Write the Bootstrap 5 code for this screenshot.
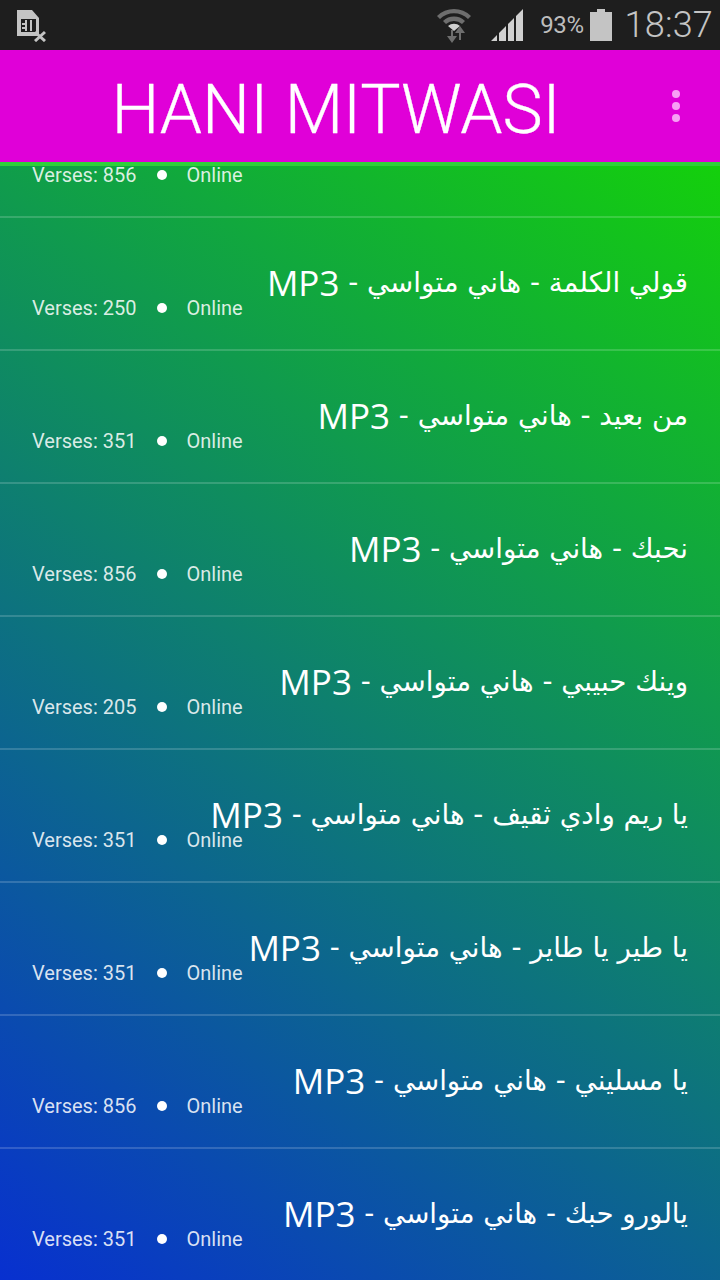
<!DOCTYPE html>
<html lang="ar">
<head>
<meta charset="utf-8">
<link rel="stylesheet" href="https://cdn.jsdelivr.net/npm/bootstrap@5.3.0/dist/css/bootstrap.min.css">
<style>
html,body{margin:0;height:1280px;overflow:hidden;background:#000}
.phone{width:720px;height:1280px;font-family:Roboto,"Liberation Sans",sans-serif;overflow:hidden}
.sbar{height:50px;background:#1e1e1e;color:#bdbdbd;padding:0 7px 0 14px}
.wifi{margin-top:-1px}
.signal{margin-left:17px}
.pct{font-size:24px;letter-spacing:-.4px;margin:0 6px 0 16px}
.clock{font-size:36px;font-weight:300;letter-spacing:.2px;margin-left:13px;line-height:50px;color:#c4c4c4}
.appbar{height:112px;background:#e000d8;color:#fff}
.apptitle{font-size:67.6px;font-weight:300;line-height:1;width:672px;text-align:center;margin-top:9px;-webkit-text-stroke:.3px #fff}
.dotcol{gap:4px}
.vdot{width:8px;height:8px;border-radius:50%;background:#f7a0f5;display:block}
.sep{height:4px;background:#2fd03a}
.listwrap{height:1114px;background:linear-gradient(216deg,#14d00c 0%,#0830d0 100%)}
.songrow{height:133px;border-bottom:2px solid rgba(255,255,255,.17);color:#fff;display:grid;padding:0 32px;grid-template-columns:1fr;align-items:start}
.songrow.cut{height:52px}
.songtitle{grid-area:1/1;justify-self:end;font-size:27.7px;line-height:40px;direction:rtl;white-space:nowrap;font-family:"DejaVu Sans",sans-serif;margin-top:45px}
.ar{position:relative;top:-4px}
.en{font-family:"Open Sans",sans-serif;font-size:35px;font-weight:400}
.meta{grid-area:1/1;justify-self:start;margin-top:78px;display:flex;align-items:center;font-size:20px;line-height:24px;color:rgba(255,255,255,.85);white-space:nowrap}
.cut .meta{margin-top:-3px}
.mdot{width:10px;height:10px;border-radius:50%;background:#fff;margin:0 19px 0 21px}
</style>
</head>
<body>
<div class="phone d-flex flex-column">
<div class="sbar d-flex align-items-center">
<svg width="36" height="34" viewBox="0 0 36 34" class="me-auto"><path d="M3 2h15l7 8v18H3z" fill="#c4c4c4"/><path d="M7 11h15v13H7z" fill="#1e1e1e"/><path d="M11 12h2v11h-2zM16 12h2v11h-2zM8 15h3v2H8zM8 19h3v2H8z" fill="#c4c4c4"/><path d="M21 24l10 9M31 24l-10 9" stroke="#c4c4c4" stroke-width="3"/></svg>
<svg class="wifi" width="38" height="38" viewBox="0 0 38 38"><path d="M2 10a24 24 0 0 1 34 0l-3 3a20 20 0 0 0-28 0z M8 15a16 16 0 0 1 22 0l-3 3a12 12 0 0 0-16 0z" fill="#6e6e6e"/><path d="M13 20a9 9 0 0 1 12 0l-6 5z" fill="#d0d0d0"/><path d="M16 30l-4 0 5 7 5-7-4 0v-6h-2z M24 27h-4l5-7 5 7-4 0v7h-2z" fill="#6e6e6e"/></svg>
<svg class="signal" width="34" height="34" viewBox="0 0 34 34"><path d="M1 33l6-6v6zM9 33V25l7-7v15zM18 33V16l6-6v23zM26 33V8l7-7v32z" fill="#d0d0d0"/></svg>
<span class="pct">93%</span>
<svg width="22" height="32" viewBox="0 0 22 32"><path d="M7 0h8v3h7v29H0V3h7z" fill="#c4c4c4"/></svg>
<span class="clock">18:37</span>
</div>
<div class="appbar d-flex align-items-center">
<div class="apptitle">HANI MITWASI</div>
<div class="d-flex flex-column dotcol"><i class="vdot"></i><i class="vdot"></i><i class="vdot"></i></div>
</div>
<div class="sep"></div>
<div class="listwrap">
<div class="songrow cut"><div class="meta"><span>Verses: 856</span><span class="mdot"></span><span>Online</span></div></div>
<div class="songrow"><div class="songtitle"><span class="ar">قولي الكلمة - هاني متواسي - </span><span class="en">MP3</span></div><div class="meta"><span>Verses: 250</span><span class="mdot"></span><span>Online</span></div></div>
<div class="songrow"><div class="songtitle"><span class="ar">من بعيد - هاني متواسي - </span><span class="en">MP3</span></div><div class="meta"><span>Verses: 351</span><span class="mdot"></span><span>Online</span></div></div>
<div class="songrow"><div class="songtitle"><span class="ar">نحبك - هاني متواسي - </span><span class="en">MP3</span></div><div class="meta"><span>Verses: 856</span><span class="mdot"></span><span>Online</span></div></div>
<div class="songrow"><div class="songtitle"><span class="ar">وينك حبيبي - هاني متواسي - </span><span class="en">MP3</span></div><div class="meta"><span>Verses: 205</span><span class="mdot"></span><span>Online</span></div></div>
<div class="songrow"><div class="songtitle"><span class="ar">يا ريم وادي ثقيف - هاني متواسي - </span><span class="en">MP3</span></div><div class="meta"><span>Verses: 351</span><span class="mdot"></span><span>Online</span></div></div>
<div class="songrow"><div class="songtitle"><span class="ar">يا طير يا طاير - هاني متواسي - </span><span class="en">MP3</span></div><div class="meta"><span>Verses: 351</span><span class="mdot"></span><span>Online</span></div></div>
<div class="songrow"><div class="songtitle"><span class="ar">يا مسليني - هاني متواسي - </span><span class="en">MP3</span></div><div class="meta"><span>Verses: 856</span><span class="mdot"></span><span>Online</span></div></div>
<div class="songrow"><div class="songtitle"><span class="ar">يالورو حبك - هاني متواسي - </span><span class="en">MP3</span></div><div class="meta"><span>Verses: 351</span><span class="mdot"></span><span>Online</span></div></div>
</div>
</div>
<script src="https://cdn.jsdelivr.net/npm/bootstrap@5.3.0/dist/js/bootstrap.bundle.min.js"></script>
</body>
</html>
